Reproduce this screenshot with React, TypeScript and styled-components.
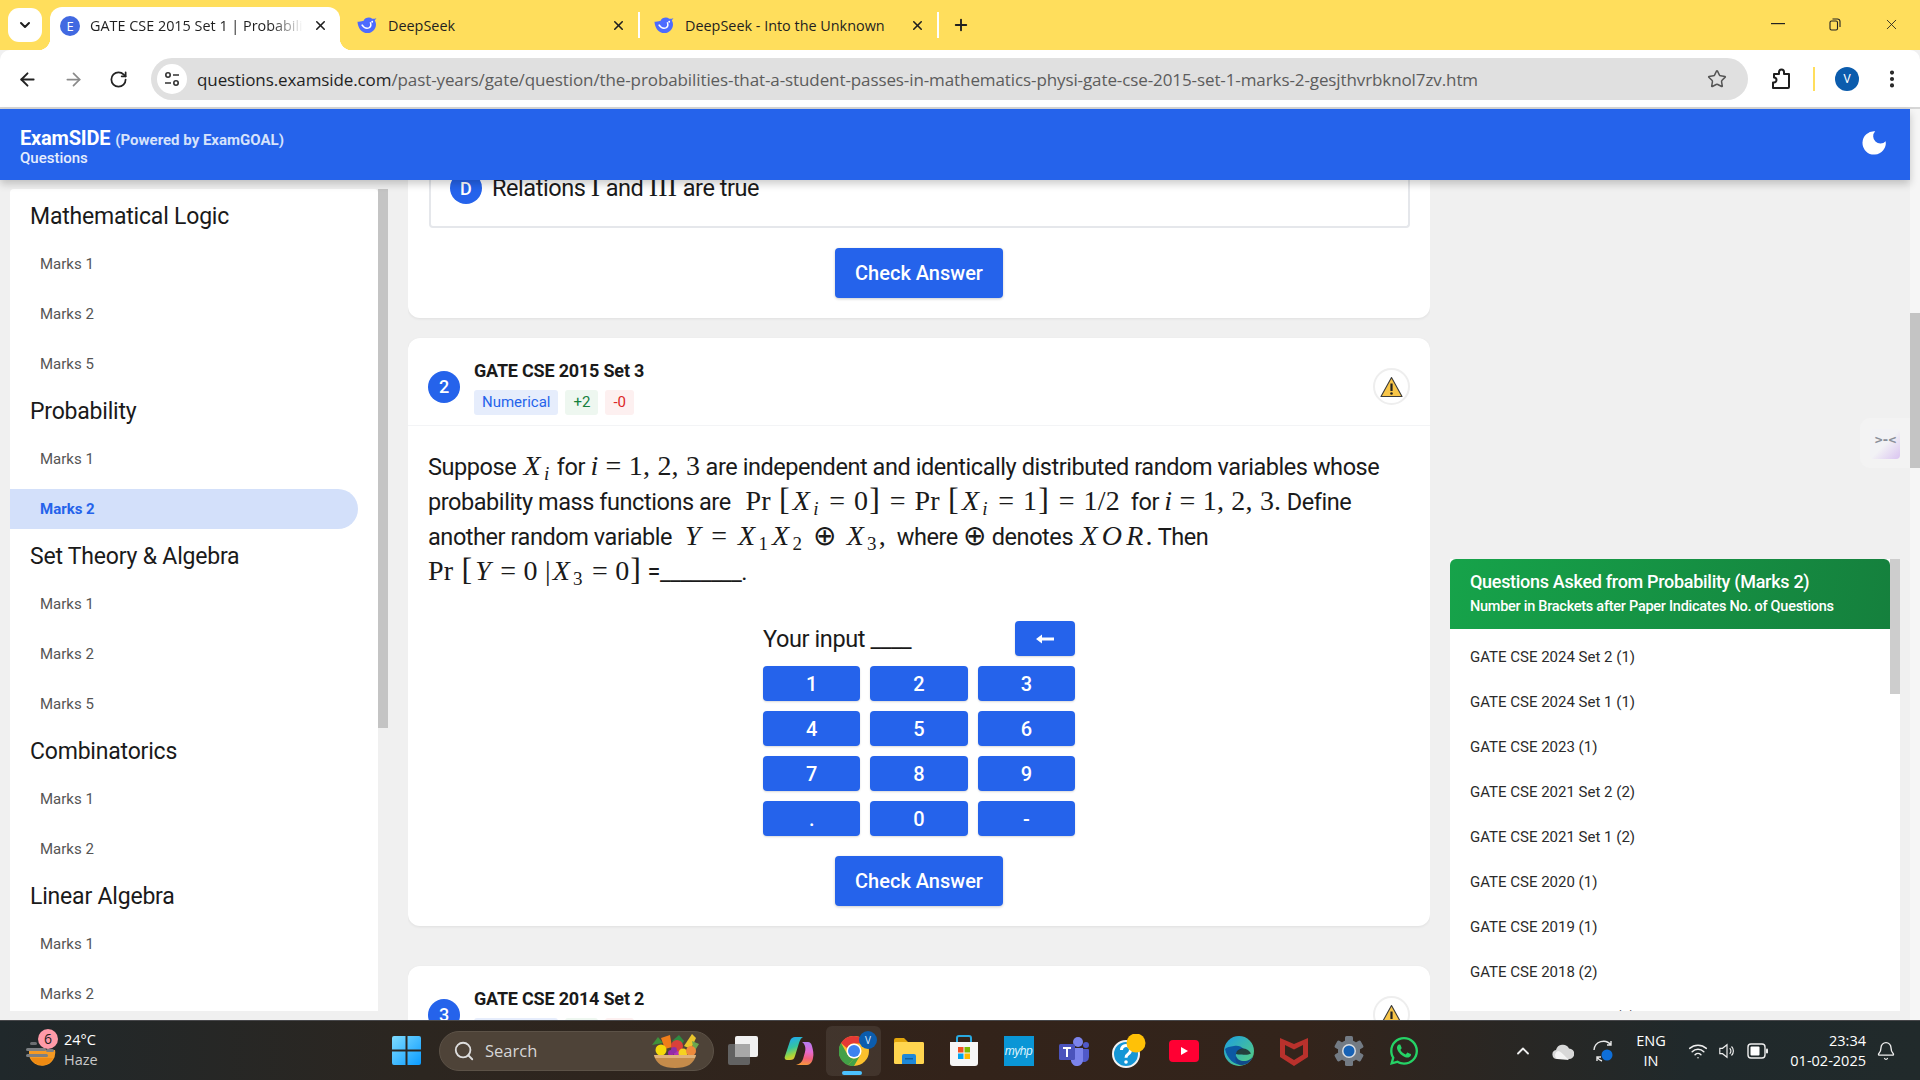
import { ReactNode } from "react";
import styled, { createGlobalStyle } from "styled-components";
import {
  ArrowLeft,
  ArrowRight,
  Bell,
  ChevronDown,
  ChevronUp,
  EllipsisVertical,
  Plus,
  RotateCw,
  Search,
  Star,
  Wifi,
  X,
} from "lucide-react";
import { FaWhatsapp } from "react-icons/fa";

const GlobalStyle = createGlobalStyle`
  html, body { margin: 0; padding: 0; background: #f0f0f0; overflow: hidden; }
  * { box-sizing: border-box; }
  body { font-family: Roboto, "Liberation Sans", sans-serif; }
`;

const BLUE = "#2563eb";
const UI_FONT = `"Open Sans", "Noto Sans", sans-serif`;

// ---- browser chrome ----
const Screen = styled.div`
  width: 1920px;
  height: 1080px;
  display: flex;
  flex-direction: column;
  overflow: hidden;
`;
const TabStrip = styled.div`
  height: 50px;
  flex: none;
  background: #ffde5c;
  display: flex;
  padding-left: 8px;
  font-family: ${UI_FONT};
  font-size: 14.4px;
  color: #1f1f1f;
`;
const TabMenu = styled.div`
  width: 34px;
  height: 34px;
  margin-top: 8px;
  margin-right: 8px;
  border-radius: 11px;
  background: #fff;
  display: flex;
  align-items: center;
  justify-content: center;
`;
const ActiveTab = styled.div`
  width: 290px;
  height: 43px;
  margin-top: 7px;
  padding: 0 12px 6px 10px;
  display: flex;
  align-items: center;
  gap: 10px;
  position: relative;
  border-radius: 12px 12px 0 0;
  background: #fff;
  &::before,
  &::after {
    content: "";
    position: absolute;
    bottom: 0;
    width: 12px;
    height: 12px;
  }
  &::before {
    left: -12px;
    background: radial-gradient(circle at 0 0, transparent 12px, #fff 12.5px);
  }
  &::after {
    right: -12px;
    background: radial-gradient(circle at 100% 0, transparent 12px, #fff 12.5px);
  }
`;
const Tab = styled.div<{ $w: number; $left: number }>`
  width: ${(p) => p.$w}px;
  height: 26px;
  margin-top: 12px;
  padding: 0 12px 0 ${(p) => p.$left}px;
  display: flex;
  align-items: center;
  gap: 11px;
  border-right: 2px solid #fff;
`;
const TabTitle = styled.span<{ $fade?: boolean }>`
  flex: 1;
  min-width: 0;
  white-space: nowrap;
  overflow: hidden;
  ${(p) =>
    p.$fade &&
    `-webkit-mask-image: linear-gradient(to right, #000 85%, transparent 100%);
     mask-image: linear-gradient(to right, #000 85%, transparent 100%);`}
`;
const LetterFavicon = styled.span`
  width: 20px;
  height: 20px;
  flex: none;
  border-radius: 50%;
  background: #4169e1;
  color: #fff;
  font-size: 13px;
  display: flex;
  align-items: center;
  justify-content: center;
`;
const NewTab = styled.div`
  width: 44px;
  display: flex;
  align-items: center;
  justify-content: center;
`;
const WindowControls = styled.div`
  margin-left: auto;
  display: flex;
  align-items: center;
  padding-bottom: 2px;
`;
const WindowButton = styled.div`
  width: 57px;
  display: flex;
  justify-content: center;
`;
const Toolbar = styled.div`
  height: 59px;
  flex: none;
  background: #fff;
  border-radius: 10px 10px 0 0;
  border-bottom: 2px solid #d6d6d6;
  display: flex;
  align-items: center;
  padding: 1px 0 0 4px;
  color: #222;
`;
const NavSlot = styled.div<{ $w?: number }>`
  width: ${(p) => p.$w ?? 46}px;
  flex: none;
  display: flex;
  align-items: center;
  justify-content: center;
`;
const Omnibox = styled.div`
  width: 1597px;
  height: 42px;
  margin-left: 10px;
  margin-right: 10px;
  border-radius: 21px;
  background: #e0e0e0;
  display: flex;
  align-items: center;
  padding: 0 21px 0 6px;
`;
const SiteInfo = styled.div`
  width: 30px;
  height: 30px;
  border-radius: 50%;
  background: #fff;
  display: flex;
  align-items: center;
  justify-content: center;
  margin-right: 10px;
  flex: none;
`;
const UrlText = styled.div`
  flex: 1;
  font-family: ${UI_FONT};
  font-size: 17px;
  letter-spacing: -0.1px;
  white-space: nowrap;
  color: #5c5c5c;
  b {
    font-weight: 400;
    color: #1f1f1f;
  }
`;
const YellowBar = styled.div`
  width: 2px;
  height: 24px;
  background: #ffde5c;
  margin: 0 10px;
`;
const Avatar = styled.div`
  width: 24px;
  height: 24px;
  border-radius: 50%;
  background: #0b5cad;
  color: #fff;
  font-size: 12px;
  display: flex;
  align-items: center;
  justify-content: center;
  margin: 0 15px 0 10px;
`;

// ---- page ----
const PageArea = styled.div`
  flex: 1;
  display: flex;
  position: relative;
  min-height: 0;
  background: #f0f0f0;
`;
const Site = styled.div`
  width: 1910px;
  display: flex;
  flex-direction: column;
`;
const PageGutter = styled.div`
  width: 10px;
  padding-top: 204px;
  background: #f6f6f6;
`;
const PageThumb = styled.div`
  height: 155px;
  background: #c4c4c4;
`;
const SiteHeader = styled.header`
  height: 71px;
  flex: none;
  background: ${BLUE};
  color: #fff;
  padding: 6px 22px 0 20px;
  display: flex;
  align-items: center;
  justify-content: space-between;
  position: relative;
  z-index: 2;
  box-shadow: 0 4px 8px rgba(0, 0, 0, 0.2);
  svg {
    margin-top: -10px;
  }
`;
const Brand = styled.div`
  line-height: 18px;
  font-size: 15px;
  font-weight: 500;
  color: #e6edfd;
  strong {
    font-size: 20px;
    font-weight: 700;
    letter-spacing: -0.2px;
    color: #fff;
  }
  span {
    font-size: 15px;
    font-weight: 700;
    color: #d6e2fb;
    margin-left: 5px;
  }
`;
const Columns = styled.div`
  flex: 1;
  display: flex;
  min-height: 0;
  padding-left: 10px;
`;
const SideWrap = styled.aside`
  width: 378px;
  height: 822px;
  margin-top: 9px;
  flex: none;
  display: flex;
`;
const SideList = styled.nav`
  width: 368px;
  overflow: hidden;
  background: #fff;
  border-radius: 4px 4px 0 0;
  padding-top: 10px;
`;
const SideThumb = styled.div`
  width: 10px;
  height: 539px;
  background: #c4c4c4;
`;
const SideHeading = styled.h3`
  margin: 0 0 9px;
  height: 36px;
  padding-left: 20px;
  font-size: 23px;
  font-weight: 400;
  line-height: 36px;
  letter-spacing: -0.2px;
  color: #1a1a1a;
`;
const SideItem = styled.div<{ $active?: boolean }>`
  width: 348px;
  height: 40px;
  margin-bottom: 10px;
  padding-left: 30px;
  display: flex;
  align-items: center;
  border-radius: 0 20px 20px 0;
  font-size: 15px;
  color: ${(p) => (p.$active ? BLUE : "#555")};
  font-weight: ${(p) => (p.$active ? 700 : 400)};
  background: ${(p) => (p.$active ? "#d3e0fa" : "transparent")};
`;
const Main = styled.main`
  width: 1022px;
  margin-left: 20px;
  flex: none;
  overflow: hidden;
`;
const Card = styled.section<{ $first?: boolean; $gap?: number }>`
  background: #fff;
  border-radius: 12px;
  margin-top: ${(p) => (p.$first ? "-40px" : "0")};
  margin-bottom: ${(p) => p.$gap ?? 20}px;
  padding-bottom: 20px;
  box-shadow: 0 1px 3px rgba(0, 0, 0, 0.07);
`;
const OptionBox = styled.div`
  margin: 0 20px 20px 21px;
  height: 88px;
  padding: 32px 0 0 19px;
  border: 2px solid #e5e7eb;
  border-top: none;
  border-radius: 0 0 4px 4px;
  display: flex;
  gap: 10px;
  font-size: 23.5px;
`;
const OptionLine = styled.div`
  line-height: 32px;
  color: #1a1a1a;
  letter-spacing: -0.44px;
`;
const RoundMark = styled.span`
  width: 32px;
  height: 32px;
  flex: none;
  border-radius: 50%;
  background: ${BLUE};
  color: #fff;
  font-size: 18px;
  font-weight: 500;
  display: flex;
  align-items: center;
  justify-content: center;
`;
const CheckButton = styled.button`
  display: block;
  width: 168px;
  height: 50px;
  margin: 0 auto;
  border: none;
  border-radius: 4px;
  background: ${BLUE};
  color: #fff;
  font-family: inherit;
  font-size: 20px;
  font-weight: 500;
  box-shadow: 0 1px 3px rgba(0, 0, 0, 0.2);
`;
const CardHead = styled.header`
  height: 88px;
  padding: 21px 20px 11px;
  border-bottom: 1px solid #f3f4f6;
  display: flex;
  align-items: center;
  gap: 14px;
`;
const HeadText = styled.div`
  flex: 1;
`;
const PaperTitle = styled.div`
  font-size: 18px;
  line-height: 24px;
  font-weight: 700;
  letter-spacing: -0.2px;
  color: #1a1a1a;
`;
const Badges = styled.div`
  display: flex;
  gap: 7px;
  margin-top: 7px;
`;
const Badge = styled.span<{ $bg: string; $fg: string }>`
  height: 25px;
  padding: 0 8px;
  border-radius: 3px;
  background: ${(p) => p.$bg};
  color: ${(p) => p.$fg};
  font-size: 15px;
  line-height: 25px;
`;
const ReportButton = styled.div`
  width: 37px;
  height: 37px;
  border-radius: 50%;
  border: 2px solid #eee;
  background: #fff;
  display: flex;
  align-items: center;
  justify-content: center;
`;
const Question = styled.div`
  padding: 24px 20px 0;
  font-size: 23.5px;
  line-height: 35px;
  letter-spacing: -0.44px;
  color: #1a1a1a;
`;
const Line = styled.div`
  white-space: nowrap;
`;
const Tex = styled.span<{ $lead?: number }>`
  font-family: "Liberation Serif", serif;
  font-size: 28px;
  line-height: 0;
  letter-spacing: 0.2px;
  margin-left: ${(p) => p.$lead ?? 0}px;
  sub {
    font-size: 19px;
    line-height: 0;
    vertical-align: -5px;
    padding: 0 2px 0 1px;
  }
`;
const Cap = styled.i`
  padding: 0 2px;
`;
const Eq = styled.span`
  margin: 0 1.5px;
`;
const Br = styled.span`
  font-size: 32px;
  font-weight: 400;
  margin: 0 1px;
`;
const Keypad = styled.div`
  width: 312px;
  margin: 31px auto 20px;
  display: grid;
  grid-template-columns: repeat(3, 1fr);
  gap: 10px;
`;
const InputRow = styled.div`
  grid-column: 1 / -1;
  display: flex;
  align-items: center;
  justify-content: space-between;
  font-size: 23.5px;
  letter-spacing: -0.4px;
  color: #1a1a1a;
`;
const KeyButton = styled.button<{ $w?: number }>`
  height: 35px;
  width: ${(p) => (p.$w ? `${p.$w}px` : "auto")};
  border: none;
  padding: 0;
  border-radius: 4px;
  background: ${BLUE};
  color: #fff;
  font-family: inherit;
  font-size: 20px;
  font-weight: 500;
  display: flex;
  align-items: center;
  justify-content: center;
  box-shadow: 0 1px 2px rgba(0, 0, 0, 0.15);
`;
const RightCol = styled.aside`
  width: 450px;
  margin-left: 20px;
  margin-top: 379px;
  height: 452px;
  flex: none;
  background: #fff;
  display: flex;
  overflow: hidden;
`;
const PanelBody = styled.div`
  width: 440px;
  flex: none;
`;
const PanelHead = styled.div`
  height: 70px;
  padding: 11px 20px 0;
  border-radius: 6px 6px 0 0;
  background: linear-gradient(100deg, #16a34a, #15803d);
  color: #fff;
  font-weight: 500;
`;
const PanelTitle = styled.div`
  font-size: 18px;
  line-height: 24px;
  letter-spacing: -0.3px;
`;
const PanelSub = styled.div`
  font-size: 14.5px;
  line-height: 25px;
  letter-spacing: -0.27px;
`;
const PanelList = styled.div`
  padding-top: 5px;
`;
const PanelItem = styled.div`
  height: 45px;
  padding-left: 20px;
  display: flex;
  align-items: center;
  font-size: 15px;
  color: #2b2b2b;
`;
const PanelThumb = styled.div`
  width: 10px;
  height: 135px;
  background: #cdcdcd;
`;
const FloatTab = styled.div`
  position: absolute;
  top: 309px;
  right: 10px;
  width: 50px;
  height: 50px;
  padding: 11px 10px;
  background: #f3f3f3;
  border-radius: 10px 0 0 10px;
`;
const FloatTile = styled.div`
  width: 30px;
  height: 30px;
  border-radius: 4px;
  background: linear-gradient(135deg, #f2f2f5 50%, #d9c3f0);
  color: #8a8f99;
  font: 700 13px/22px "DejaVu Sans Mono", monospace;
  text-align: center;
  letter-spacing: -1px;
`;

// ---- taskbar ----
const Taskbar = styled.footer`
  height: 60px;
  flex: none;
  display: flex;
  align-items: center;
  position: relative;
  z-index: 3;
  border-top: 1px solid #47474a;
  background: linear-gradient(90deg, #20282b 0%, #2c2620 22%, #33231a 50%, #33241b 68%, #20292b 88%, #212a2b 100%);
  color: #fff;
  font-family: ${UI_FONT};
`;
const Weather = styled.div`
  width: 379px;
  flex: none;
  padding-left: 25px;
  display: flex;
  align-items: center;
  gap: 7px;
  position: relative;
`;
const CountBadge = styled.span`
  position: absolute;
  left: 38px;
  top: -3px;
  width: 20px;
  height: 20px;
  border-radius: 50%;
  background: #ff9aa8;
  color: #1c1c1c;
  font-size: 14px;
  line-height: 20px;
  text-align: center;
`;
const WeatherText = styled.div`
  font-size: 14.5px;
  line-height: 20px;
  margin-top: -2px;
  span {
    display: block;
    color: #c9c9c9;
  }
`;
const StartSlot = styled.div`
  width: 60px;
  flex: none;
  display: flex;
  justify-content: center;
  padding-right: 5px;
`;
const SearchPill = styled.div`
  width: 275px;
  height: 40px;
  flex: none;
  margin-right: 2px;
  border-radius: 20px;
  background: #4e4338;
  border: 1px solid #5c5247;
  display: flex;
  align-items: center;
  padding: 0 13px 0 13px;
  font-size: 16.5px;
  color: #d6d6d6;
  gap: 10px;
  span {
    flex: 1;
  }
`;
const AppSlot = styled.div<{ $active?: boolean }>`
  width: 55px;
  height: 50px;
  flex: none;
  display: flex;
  align-items: center;
  justify-content: center;
  position: relative;
  ${(p) =>
    p.$active &&
    `background: rgba(255, 255, 255, 0.08);
     border-radius: 6px;
     &::after {
       content: "";
       position: absolute;
       left: 16px;
       bottom: 1px;
       width: 20px;
       height: 4px;
       border-radius: 2px;
       background: #4cc2ff;
     }`}
`;
const ProfileDot = styled.span`
  position: absolute;
  right: 4px;
  top: 5px;
  width: 18px;
  height: 18px;
  border-radius: 50%;
  background: #0b5cad;
  color: #dfeaff;
  font-size: 10px;
  line-height: 18px;
  text-align: center;
`;
const Tray = styled.div`
  margin-left: auto;
  padding-right: 14px;
  display: flex;
  align-items: center;
`;
const TraySlot = styled.div<{ $w: number }>`
  width: ${(p) => p.$w}px;
  flex: none;
  display: flex;
  align-items: center;
  justify-content: center;
`;
const TwoLines = styled.div<{ $w: number; $right?: boolean }>`
  width: ${(p) => p.$w}px;
  flex: none;
  font-size: 14.5px;
  line-height: 20px;
  white-space: nowrap;
  text-align: ${(p) => (p.$right ? "right" : "center")};
`;

// ---- drawings ----
const Whale = () => (
  <svg width="21" height="19" viewBox="0 0 22 20" fill="none" style={{ flex: "none" }}>
    <path d="M1.500 6C2 13 6 18 12 18c5 0 9-4 9-9 0-2-.7-3.500-1.300-4.300L21.500 2c-1.500.8-3 1.200-4.500.8C14 .5 9 2 8 5 5.500 6 3 6 1.500 6Z" fill="#4d6bfe" />
    <path d="M6 9c2 3 5 4.500 7.500 3.500 2-1 2.500-3.500 1.500-6" stroke="#fff" strokeWidth="1.600" />
    <circle cx="17" cy="6" r="1" fill="#fff" />
  </svg>
);

const TuneIcon = () => (
  <svg width="18" height="18" viewBox="0 0 18 18" fill="none" stroke="#333" strokeWidth="1.600">
    <circle cx="5" cy="5" r="2.200" />
    <path d="M10 5h6M2 13h6" />
    <circle cx="13" cy="13" r="2.200" />
  </svg>
);

const ExtensionIcon = () => (
  <svg width="24" height="24" viewBox="0 0 24 24" fill="none" stroke="#1f1f1f" strokeWidth="2" strokeLinejoin="round">
    <path d="M4 21h15a1 1 0 0 0 1-1V7h-5V5a2.500 2.500 0 0 0-5 0v2H5v3.500a2.500 2.500 0 0 1 0 5H4Z" />
  </svg>
);

const MoonIcon = () => (
  <svg width="28" height="28" viewBox="0 0 24 24" fill="#fff">
    <path d="M13 2a5.500 5.500 0 0 0 9 8.500A10 10 0 1 1 13 2Z" />
  </svg>
);

const WarnIcon = () => (
  <svg width="23" height="22" viewBox="0 0 23 22">
    <path d="M11.500 1.500 22 20.500H1Z" fill="#f7c548" stroke="#3a3a3a" strokeWidth="1.100" strokeLinejoin="round" />
    <path d="M11.500 7.500v7.500" stroke="#222" strokeWidth="2.200" />
    <circle cx="11.500" cy="17.500" r="1.300" fill="#222" />
  </svg>
);

const BackArrow = () => (
  <svg width="18" height="10" viewBox="0 0 18 10" fill="#fff">
    <path d="M0 5 6 .5V3.500H18V6.500H6V9.500Z" />
  </svg>
);

const RestoreIcon = () => (
  <svg width="12" height="13" viewBox="0 0 12 13" fill="none" stroke="#222" strokeWidth="1.100">
    <rect x="1" y="3" width="7.500" height="9" rx="1.500" />
    <path d="M3.500 1h5A2.500 2.500 0 0 1 11 3.500V9" />
  </svg>
);

const WeatherIcon = () => (
  <svg width="32" height="30" viewBox="0 0 32 30" style={{ flex: "none" }}>
    <path d="M4 14h26a13 13 0 0 1-26 5Z" fill="#f59a23" />
    <path d="M6 22h22a12 12 0 0 1-22 0Z" fill="#ee8a12" />
    <rect x="5" y="6" width="7" height="3" rx="1.500" fill="#6c6f72" />
    <rect x="1" y="12" width="20" height="3" rx="1.500" fill="#7c7f82" />
    <rect x="21" y="13" width="8" height="3" rx="1.500" fill="#7c7f82" />
    <rect x="1" y="18" width="22" height="3" rx="1.500" fill="#7c7f82" />
  </svg>
);

const WinLogo = () => (
  <svg width="29" height="29" viewBox="0 0 29 29">
    <defs>
      <linearGradient id="win" x1="0" y1="0" x2="1" y2="1">
        <stop offset="0" stopColor="#7fdcff" />
        <stop offset="1" stopColor="#0a9bff" />
      </linearGradient>
    </defs>
    <path d="M0 2a2 2 0 0 1 2-2h11.500v13.500H0ZM15.500 0H27a2 2 0 0 1 2 2v11.500H15.500ZM0 15.500h13.500V29H2a2 2 0 0 1-2-2ZM15.500 15.500H29V27a2 2 0 0 1-2 2H15.500Z" fill="url(#win)" />
  </svg>
);

const FruitBowl = () => (
  <svg width="50" height="36" viewBox="0 0 50 36" style={{ flex: "none" }}>
    <path d="M2 12 8 4l5 6Z" fill="#3f8f3c" />
    <path d="M11 5 20 2l2 12-7 2Z" fill="#ef7d1a" />
    <path d="M22 8l7-6 5 6-4 6Z" fill="#2f8a41" />
    <circle cx="27" cy="13" r="6" fill="#d9413b" />
    <path d="M34 13 42 1l4 4-5 11Z" fill="#e9c52c" />
    <path d="M42 8l7 3-5 8Z" fill="#6aa84f" />
    <circle cx="11" cy="17" r="5.500" fill="#f5d90a" />
    <circle cx="21" cy="20" r="3" fill="#9a2aa8" />
    <circle cx="27" cy="21" r="3" fill="#b333b5" />
    <circle cx="24" cy="17" r="3" fill="#8e2fa8" />
    <circle cx="33" cy="20" r="4.500" fill="#f6d21f" />
    <circle cx="41" cy="18" r="5" fill="#ee8a3c" />
    <path d="M4 22h42c-2 9-9 13-21 13S6 31 4 22Z" fill="#c58b4a" />
    <path d="M4 22h42l-1 3H5Z" fill="#e0b27a" />
  </svg>
);

const TaskView = () => (
  <svg width="32" height="29" viewBox="0 0 32 29">
    <rect x="0" y="8" width="22" height="21" rx="2" fill="#626262" />
    <rect x="7" y="0" width="23" height="21" rx="2" fill="#f1f1f1" />
    <rect x="7" y="8" width="15" height="13" fill="#a8a8a8" />
  </svg>
);

const Copilot = () => (
  <svg width="30" height="30" viewBox="0 0 30 30">
    <defs>
      <linearGradient id="cpA" x1="0.3" y1="0" x2="0.6" y2="1">
        <stop offset="0" stopColor="#1fa8f5" />
        <stop offset="0.45" stopColor="#35c4a0" />
        <stop offset="0.75" stopColor="#a5d63a" />
        <stop offset="1" stopColor="#f5c330" />
      </linearGradient>
      <linearGradient id="cpB" x1="0.5" y1="0" x2="0.4" y2="1">
        <stop offset="0" stopColor="#b47cf0" />
        <stop offset="0.4" stopColor="#e66ad0" />
        <stop offset="0.7" stopColor="#f2607a" />
        <stop offset="1" stopColor="#f79a3a" />
      </linearGradient>
    </defs>
    <path d="M18 6h6c2 0 3 1 4 4 1 4 2 8 1 12-.6 4-3 7-6 7H12c4-1 6-3 7-6l2-7c1-4 0-8-3-10Z" fill="url(#cpB)" />
    <path d="M11 1h8c-2 1-3 3-4 6l-4 13c-1 3-2 4-5 4H3c-2 0-3-2-2-4L6 5c1-3 3-4 5-4Z" fill="url(#cpA)" />
  </svg>
);

const ChromeLogo = ({ size = 30 }: { size?: number }) => (
  <svg width={size} height={size} viewBox="0 0 30 30">
    <circle cx="15" cy="15" r="15" fill="#fbc02d" />
    <path d="M15 0a15 15 0 0 1 13 7.500H15a7.500 7.500 0 0 0-7 4.700L2 7A15 15 0 0 1 15 0Z" fill="#e53935" />
    <path d="M2 7l6.500 11.500A7.500 7.500 0 0 0 15 22.500L9 29.200A15 15 0 0 1 2 7Z" fill="#43a047" />
    <path d="M9 29.200 15 22.500a7.500 7.500 0 0 0 6.500-3.750L15 30a15 15 0 0 1-6-.8Z" fill="#43a047" />
    <circle cx="15" cy="15" r="7.500" fill="#fff" />
    <circle cx="15" cy="15" r="6" fill="#3d82f0" />
  </svg>
);

const FolderIcon = () => (
  <svg width="30" height="30" viewBox="0 0 30 30">
    <path d="M0 4a2 2 0 0 1 2-2h8l4 4h14a2 2 0 0 1 2 2v4H0Z" fill="#e2a50c" />
    <rect x="0" y="6" width="30" height="22" rx="1.500" fill="#ffd54f" />
    <path d="M8 20a2 2 0 0 1 2-2h10a2 2 0 0 1 2 2v8H8Z" fill="#1e88d9" />
    <rect x="11" y="22" width="8" height="1.500" fill="#0f5f9e" />
  </svg>
);

const StoreIcon = () => (
  <svg width="30" height="32" viewBox="0 0 30 32">
    <path d="M8 8V3a2 2 0 0 1 2-2h10a2 2 0 0 1 2 2v5" fill="none" stroke="#29a9e0" strokeWidth="2" />
    <path d="M1 7h28v21a3 3 0 0 1-3 3H4a3 3 0 0 1-3-3Z" fill="#f6f6f6" />
    <rect x="9" y="12" width="5.500" height="5.500" fill="#f25022" />
    <rect x="15.500" y="12" width="5.500" height="5.500" fill="#7fba00" />
    <rect x="9" y="18.500" width="5.500" height="5.500" fill="#00a4ef" />
    <rect x="15.500" y="18.500" width="5.500" height="5.500" fill="#ffb900" />
  </svg>
);

const MyHpTile = styled.span`
  width: 30px;
  height: 30px;
  background: #0a96d6;
  color: #dff3fc;
  font: italic 12px/30px "Liberation Sans", sans-serif;
  letter-spacing: -0.5px;
  text-align: center;
`;

const TeamsIcon = () => (
  <svg width="30" height="30" viewBox="0 0 30 30">
    <circle cx="19" cy="6" r="5" fill="#7b83eb" />
    <circle cx="27" cy="9" r="3" fill="#5059c9" />
    <path d="M22 13h7a1 1 0 0 1 1 1v7a5 5 0 0 1-8 4Z" fill="#5059c9" />
    <path d="M11 12h13v11a6 6 0 0 1-12 2Z" fill="#7b83eb" />
    <rect x="0" y="8" width="16" height="16" rx="1.500" fill="#4b53bc" />
    <path d="M4 12h8M8 12v9" stroke="#fff" strokeWidth="2" />
  </svg>
);

const HelpIcon = () => (
  <svg width="34" height="34" viewBox="0 0 34 34">
    <circle cx="14" cy="20" r="13" fill="#1496d6" stroke="#f2f2f2" strokeWidth="2" />
    <path d="M9.500 16a4.500 4.500 0 1 1 7 3.700c-1.600 1.100-2.500 2-2.500 4" fill="none" stroke="#fff" strokeWidth="3" />
    <circle cx="14" cy="28" r="1.800" fill="#fff" />
    <ellipse cx="24" cy="9" rx="9.500" ry="9.500" fill="#ffc107" />
  </svg>
);

const YouTubeIcon = () => (
  <svg width="30" height="22" viewBox="0 0 30 22">
    <rect width="30" height="22" rx="4" fill="#ff0033" />
    <path d="M12 7l7 4-7 4Z" fill="#fff" />
  </svg>
);

const EdgeIcon = () => (
  <svg width="30" height="30" viewBox="0 0 30 30">
    <defs>
      <linearGradient id="edgeTop" x1="0" y1="0" x2="1" y2="1">
        <stop offset="0" stopColor="#1b9de2" />
        <stop offset="1" stopColor="#5ad17a" />
      </linearGradient>
    </defs>
    <circle cx="15" cy="15" r="15" fill="url(#edgeTop)" />
    <path d="M1 13C3 24 12 30 20 29c-5-1-9-6-8-11 .6-3 4-5.500 8-5-3-3-7-4-10-3-4 .6-7 1-9 3Z" fill="#0c59a4" />
    <path d="M29 19c-1 6-6 10-11 10-5 0-8-5-6-9 1 3 4 5 8 5 4 0 8-2 9-6Z" fill="#114a8b" />
    <path d="M12 18c0-3 3-5.500 7-5.500 3 0 6 1.500 8 5-3 2-9 1-9 1-3 0-5 0-6-.5Z" fill="#20292b" opacity="0.85" />
  </svg>
);

const McAfeeIcon = () => (
  <svg width="28" height="30" viewBox="0 0 28 30">
    <path d="M0 2 14 8 28 2V21L14 30 0 21ZM5 9V18.500L14 24 23 18.500V9L14 13.500Z" fill="#b9312c" fillRule="evenodd" />
  </svg>
);

const GearIcon = () => (
  <svg width="30" height="30" viewBox="0 0 30 30">
    {[0, 60, 120, 180, 240, 300].map((a) => (
      <rect key={a} x="11" y="0" width="8" height="8" rx="1.500" fill="#737b84" transform={`rotate(${a} 15 15)`} />
    ))}
    <circle cx="15" cy="15" r="11" fill="#737b84" />
    <circle cx="15" cy="15" r="7" fill="#d9dde2" />
    <circle cx="15" cy="15" r="5.500" fill="#1762b5" />
  </svg>
);

const CloudIcon = () => (
  <svg width="22" height="18" viewBox="0 0 22 18">
    <path d="M5 17a4.500 4.500 0 0 1-1-8.900A7 7 0 0 1 17 6.500 5.200 5.200 0 0 1 17 17Z" fill="#d8d8d8" />
    <path d="M5 17a4.500 4.500 0 0 1 1-8c3 .5 5 3 11 9Z" fill="#f4f4f4" />
  </svg>
);

const SyncIcon = () => (
  <svg width="24" height="24" viewBox="0 0 24 24" fill="none" stroke="#e8e8e8" strokeWidth="1.400">
    <path d="M2 11A9.500 9.500 0 0 1 19 6M19 2v4h-4M5 18a9 9 0 0 0 5 4M5 22v-4h4" />
    <circle cx="15" cy="16" r="5.500" fill="#0f6fd8" stroke="none" />
  </svg>
);

const SpeakerIcon = () => (
  <svg width="20" height="20" viewBox="0 0 20 20" fill="none" stroke="#eee" strokeWidth="1.300">
    <path d="M2 7h3l5-4v14l-5-4H2Z" />
    <path d="M13 7a4 4 0 0 1 0 6M15 5a7 7 0 0 1 0 10" />
  </svg>
);

const BatteryIcon = () => (
  <svg width="22" height="16" viewBox="0 0 22 16" fill="none">
    <rect x="1" y="1" width="17" height="14" rx="3" stroke="#eee" strokeWidth="1.400" />
    <rect x="3.500" y="3.500" width="9" height="9" rx="1" fill="#fff" />
    <rect x="19" y="5.500" width="2" height="5" rx="1" fill="#eee" />
  </svg>
);

// ---- data ----
const topics: { name: string; marks: number[] }[] = [
  { name: "Mathematical Logic", marks: [1, 2, 5] },
  { name: "Probability", marks: [1, 2] },
  { name: "Set Theory & Algebra", marks: [1, 2, 5] },
  { name: "Combinatorics", marks: [1, 2] },
  { name: "Linear Algebra", marks: [1, 2] },
];

const papers = [
  "GATE CSE 2024 Set 2 (1)",
  "GATE CSE 2024 Set 1 (1)",
  "GATE CSE 2023 (1)",
  "GATE CSE 2021 Set 2 (2)",
  "GATE CSE 2021 Set 1 (2)",
  "GATE CSE 2020 (1)",
  "GATE CSE 2019 (1)",
  "GATE CSE 2018 (2)",
  "GATE CSE 2017 Set 2 (1)",
];

const keys = ["1", "2", "3", "4", "5", "6", "7", "8", "9", ".", "0", "-"];

function QuestionHead({ n, paper }: { n: number; paper: string }) {
  return (
    <CardHead>
      <RoundMark>{n}</RoundMark>
      <HeadText>
        <PaperTitle>{paper}</PaperTitle>
        <Badges>
          <Badge $bg="#e6edfc" $fg={BLUE}>Numerical</Badge>
          <Badge $bg="#eef7f0" $fg="#15803d">+2</Badge>
          <Badge $bg="#fdf0f0" $fg="#dc2626">-0</Badge>
        </Badges>
      </HeadText>
      <ReportButton>
        <WarnIcon />
      </ReportButton>
    </CardHead>
  );
}

function M({ children, lead }: { children: ReactNode; lead?: number }) {
  return <Tex $lead={lead}>{children}</Tex>;
}

export default function App() {
  return (
    <Screen>
      <GlobalStyle />
      <TabStrip>
        <TabMenu>
          <ChevronDown size={16} strokeWidth={3} />
        </TabMenu>
        <ActiveTab>
          <LetterFavicon>E</LetterFavicon>
          <TabTitle $fade>GATE CSE 2015 Set 1 | Probability</TabTitle>
          <X size={15} strokeWidth={2.5} />
        </ActiveTab>
        <Tab $w={300} $left={16}>
          <Whale />
          <TabTitle>DeepSeek</TabTitle>
          <X size={15} strokeWidth={2.5} />
        </Tab>
        <Tab $w={299} $left={13}>
          <Whale />
          <TabTitle>DeepSeek - Into the Unknown</TabTitle>
          <X size={15} strokeWidth={2.5} />
        </Tab>
        <NewTab>
          <Plus size={18} strokeWidth={2.5} />
        </NewTab>
        <WindowControls>
          <WindowButton>
            <svg width="14" height="2"><rect width="14" height="1.200" fill="#222" /></svg>
          </WindowButton>
          <WindowButton>
            <RestoreIcon />
          </WindowButton>
          <WindowButton>
            <X size={17} strokeWidth={1.200} />
          </WindowButton>
        </WindowControls>
      </TabStrip>

      <Toolbar>
        <NavSlot><ArrowLeft size={21} strokeWidth={2.2} /></NavSlot>
        <NavSlot><ArrowRight size={21} strokeWidth={2} color="#8a8a8a" /></NavSlot>
        <NavSlot $w={45}><RotateCw size={19} strokeWidth={2.2} /></NavSlot>
        <Omnibox>
          <SiteInfo><TuneIcon /></SiteInfo>
          <UrlText>
            <b>questions.examside.com</b>/past-years/gate/question/the-probabilities-that-a-student-passes-in-mathematics-physi-gate-cse-2015-set-1-marks-2-gesjthvrbknol7zv.htm
          </UrlText>
          <Star size={20} strokeWidth={1.8} color="#555" />
        </Omnibox>
        <NavSlot $w={45}><ExtensionIcon /></NavSlot>
        <YellowBar />
        <Avatar>V</Avatar>
        <NavSlot $w={36}><EllipsisVertical size={22} strokeWidth={2.5} /></NavSlot>
      </Toolbar>

      <PageArea>
        <Site>
          <SiteHeader>
            <Brand>
              <strong>ExamSIDE</strong>
              <span>(Powered by ExamGOAL)</span>
              <br />
              Questions
            </Brand>
            <MoonIcon />
          </SiteHeader>
          <Columns>
            <SideWrap>
              <SideList>
                {topics.map((t) => (
                  <div key={t.name}>
                    <SideHeading>{t.name}</SideHeading>
                    {t.marks.map((m) => (
                      <SideItem key={m} $active={t.name === "Probability" && m === 2}>
                        Marks {m}
                      </SideItem>
                    ))}
                  </div>
                ))}
              </SideList>
              <SideThumb />
            </SideWrap>

            <Main>
              <Card $first>
                <OptionBox>
                  <RoundMark>D</RoundMark>
                  <OptionLine>
                    Relations <M>I</M> and <M>III</M> are true
                  </OptionLine>
                </OptionBox>
                <CheckButton>Check Answer</CheckButton>
              </Card>

              <Card $gap={40}>
                <QuestionHead n={2} paper="GATE CSE 2015 Set 3" />
                <Question>
                  <Line>
                    Suppose <M><Cap>X</Cap><sub><i>i</i></sub></M> for <M><i>i</i> = 1, 2, 3</M> are independent and identically distributed random variables whose
                  </Line>
                  <Line>
                    probability mass functions are &nbsp;<M lead={4}>Pr <Br>[</Br><Cap>X</Cap><sub><i>i</i></sub><Eq> = </Eq>0<Br>]</Br><Eq> = </Eq>Pr <Br>[</Br><Cap>X</Cap><sub><i>i</i></sub><Eq> = </Eq>1<Br>]</Br><Eq> = </Eq>1/2</M> &nbsp;for <M><i>i</i> = 1, 2, 3.</M> Define
                  </Line>
                  <Line>
                    another random variable &nbsp;<M><Cap>Y</Cap><Eq> = </Eq><Cap>X</Cap><sub>1</sub><Cap>X</Cap><sub>2</sub><Eq> ⊕ </Eq><Cap>X</Cap><sub>3</sub>,</M> &nbsp;where <M>⊕</M> denotes <M><Cap>X</Cap><Cap>O</Cap><Cap>R</Cap>.</M> Then
                  </Line>
                  <Line>
                    <M>Pr <Br>[</Br><Cap>Y</Cap> = 0 |<Cap>X</Cap><sub>3</sub> = 0<Br>]</Br></M> =________.
                  </Line>
                </Question>
                <Keypad>
                  <InputRow>
                    <span>Your input ____</span>
                    <KeyButton $w={60}><BackArrow /></KeyButton>
                  </InputRow>
                  {keys.map((k) => (
                    <KeyButton key={k}>{k}</KeyButton>
                  ))}
                </Keypad>
                <CheckButton>Check Answer</CheckButton>
              </Card>

              <Card>
                <QuestionHead n={3} paper="GATE CSE 2014 Set 2" />
              </Card>
            </Main>

            <RightCol>
              <PanelBody>
                <PanelHead>
                  <PanelTitle>Questions Asked from Probability (Marks 2)</PanelTitle>
                  <PanelSub>Number in Brackets after Paper Indicates No. of Questions</PanelSub>
                </PanelHead>
                <PanelList>
                  {papers.map((p) => (
                    <PanelItem key={p}>{p}</PanelItem>
                  ))}
                </PanelList>
              </PanelBody>
              <PanelThumb />
            </RightCol>
          </Columns>
        </Site>
        <PageGutter>
          <PageThumb />
        </PageGutter>
        <FloatTab>
          <FloatTile>&gt;-&lt;</FloatTile>
        </FloatTab>
      </PageArea>

      <Taskbar>
        <Weather>
          <WeatherIcon />
          <CountBadge>6</CountBadge>
          <WeatherText>
            24°C
            <span>Haze</span>
          </WeatherText>
        </Weather>
        <StartSlot><WinLogo /></StartSlot>
        <SearchPill>
          <Search size={22} strokeWidth={2} color="#ddd" />
          <span>Search</span>
          <FruitBowl />
        </SearchPill>
        <AppSlot><TaskView /></AppSlot>
        <AppSlot><Copilot /></AppSlot>
        <AppSlot $active>
          <ChromeLogo />
          <ProfileDot>V</ProfileDot>
        </AppSlot>
        <AppSlot><FolderIcon /></AppSlot>
        <AppSlot><StoreIcon /></AppSlot>
        <AppSlot><MyHpTile>myhp</MyHpTile></AppSlot>
        <AppSlot><TeamsIcon /></AppSlot>
        <AppSlot><HelpIcon /></AppSlot>
        <AppSlot><YouTubeIcon /></AppSlot>
        <AppSlot><EdgeIcon /></AppSlot>
        <AppSlot><McAfeeIcon /></AppSlot>
        <AppSlot><GearIcon /></AppSlot>
        <AppSlot><FaWhatsapp size={32} color="#25d366" /></AppSlot>
        <Tray>
          <TraySlot $w={40}><ChevronUp size={20} strokeWidth={2.2} color="#eee" /></TraySlot>
          <TraySlot $w={40}><CloudIcon /></TraySlot>
          <TraySlot $w={41}><SyncIcon /></TraySlot>
          <TwoLines $w={54}>ENG<br />IN</TwoLines>
          <TraySlot $w={40}><Wifi size={20} strokeWidth={1.8} color="#eee" /></TraySlot>
          <TraySlot $w={18}><SpeakerIcon /></TraySlot>
          <TraySlot $w={44}><BatteryIcon /></TraySlot>
          <TwoLines $w={86} $right>23:34<br />01-02-2025</TwoLines>
          <TraySlot $w={40}><Bell size={20} strokeWidth={1.6} color="#eee" /></TraySlot>
        </Tray>
      </Taskbar>
    </Screen>
  );
}
